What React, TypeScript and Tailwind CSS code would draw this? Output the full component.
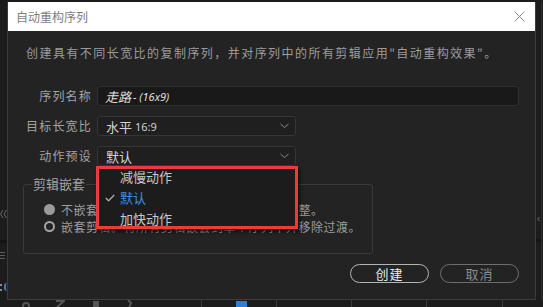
import React from "react"

const cjk = "font-['Noto_Sans_CJK_SC','Noto_Sans',sans-serif]"

const Chevron = () => (
  <svg width="9" height="6" viewBox="0 0 9 6" className="ml-auto mr-[6px]">
    <polyline points="0.5,1 4.5,4.5 8.5,1" fill="none" stroke="#8a8a8a" strokeWidth="1" />
  </svg>
)

const FormRow = ({ label, children }: { label: string; children: React.ReactNode }) => (
  <div className="flex items-center h-[20px]">
    <div className="w-[84px] text-right text-[12px] tracking-[1.2px] text-[#a3a3a3] leading-[20px]">{label}</div>
    <div className="ml-[5px] h-full flex">{children}</div>
  </div>
)

const Select = ({ children }: { children: React.ReactNode }) => (
  <div className="w-[199px] h-[20px] flex items-center bg-[#1f1f1f] border border-[#363636] rounded-[3px] pl-[8px] text-[13px] text-[#d6d6d6] leading-none">
    {children}
    <Chevron />
  </div>
)

function Menu() {
  const items = [
    { text: "减慢动作", active: false },
    { text: "默认", active: true },
    { text: "加快动作", active: false },
  ]
  return (
    <div className="absolute left-[88px] top-[135px] w-[202px] h-[63px] bg-[#1c1c1c] shadow-[inset_0_0_0_3px_#ef3a3c,2px_3px_3px_rgba(0,0,0,0.6)] flex flex-col">
      {items.map((it) => (
        <div key={it.text} className="h-[21px] flex items-center">
          <div className="w-[24px] flex justify-end pr-[5px]">
            {it.active && (
              <svg width="10" height="8" viewBox="0 0 10 8">
                <polyline points="0.8,4 3.6,6.8 9.2,1" fill="none" stroke="#a9a9a9" strokeWidth="1.4" />
              </svg>
            )}
          </div>
          <span className={`text-[13px] leading-none ${it.active ? "text-[#3d8ee6]" : "text-[#c9c9c9]"}`}>{it.text}</span>
        </div>
      ))}
    </div>
  )
}

function Dialog() {
  return (
    <div className={`w-[529px] h-[298px] flex flex-col border-x border-b border-[#3c3c3c] bg-[#232323] ${cjk}`}>
      <div className="h-[29px] bg-white flex items-center pl-[8px] pr-[10px]">
        <span className="text-[12px] text-[#7d7d7d] leading-none">自动重构序列</span>
        <svg width="11" height="11" viewBox="0 0 11 11" className="ml-auto">
          <path d="M0.5 0.5 L10.5 10.5 M10.5 0.5 L0.5 10.5" stroke="#8c8c8c" strokeWidth="1" />
        </svg>
      </div>

      <div className="relative flex-1 flex flex-col">
        <p className="mt-[13px] pl-[18px] text-[12px] leading-[18px] tracking-[1.45px] text-[#9c9c9c] whitespace-nowrap">
          创建具有不同长宽比的复制序列，并对序列中的所有剪辑应用"自动重构效果"。
        </p>

        <div className="mt-[24px] flex flex-col gap-[10px]">
          <FormRow label="序列名称">
            <div className="w-[422px] h-[20px] flex items-center bg-[#191919] border border-[#2f2f2f] rounded-[3px] pl-[7px] italic text-[#dedede] leading-none">
              <span className="text-[13px]">走路</span>
              <span className="text-[11px] font-['Noto_Sans',sans-serif] ml-[2px]">- (16x9)</span>
            </div>
          </FormRow>
          <FormRow label="目标长宽比">
            <Select>
              <span>水平</span>
              <span className="text-[11px] font-['Noto_Sans',sans-serif] ml-[3px] text-[#cfcfcf]">16:9</span>
            </Select>
          </FormRow>
          <FormRow label="动作预设">
            <Select>
              <span>默认</span>
            </Select>
          </FormRow>
        </div>

        <fieldset className="mt-[10px] ml-[15px] w-[350px] border border-[#3a3a3a] rounded-[3px] pt-[9px] pb-[18px]">
          <legend className="ml-[8px] px-[1px] text-[13px] leading-[16px] text-[#a3a3a3]">剪辑嵌套</legend>
          <div className="flex items-center h-[17px] pl-[20px]">
            <span className="w-[11px] h-[11px] rounded-full bg-[#9b9b9b]" />
            <span className="ml-[6px] text-[12px] tracking-[0.5px] text-[#9c9c9c] whitespace-nowrap">不嵌套剪辑。将在序列中对每个剪辑单独调整。</span>
          </div>
          <div className="flex items-center h-[17px] pl-[20px]">
            <span className="w-[11px] h-[11px] rounded-full border-2 border-[#a5a5a5]" />
            <span className="ml-[6px] text-[12px] tracking-[0.5px] text-[#9c9c9c] whitespace-nowrap">嵌套剪辑。将所有剪辑嵌套到单个序列中并移除过渡。</span>
          </div>
        </fieldset>

        <div className="mt-[10px] flex justify-end gap-[11px] pr-[16px]">
          <button className="w-[79px] h-[19px] rounded-full border-[1.5px] border-[#b4b4b4] text-[13px] leading-none text-[#ececec] tracking-[1px]">创建</button>
          <button className="w-[79px] h-[19px] rounded-full border-[1.5px] border-[#6e6e6e] text-[13px] leading-none text-[#8c8c8c] tracking-[1px]">取消</button>
        </div>

        <Menu />
      </div>
    </div>
  )
}

export default function App() {
  return (
    <div className="w-[543px] h-[307px] bg-[#1c1c1c] overflow-hidden flex flex-col pt-[2px]">
      <div className="flex">
        <div className="w-[7px] h-[298px] flex flex-col">
          <div className="mt-[206px] h-[12px] flex items-center">
            <svg width="7" height="10" viewBox="0 0 7 10">
              <path d="M3 1 L0.5 5 L3 9 M6.5 1 L4 5 L6.5 9" fill="none" stroke="#6a6a6a" strokeWidth="1" />
            </svg>
          </div>
          <div className="mt-[20px] h-[3px] bg-[#141414]" />
          <div className="mt-[9px] flex flex-col gap-[2px] w-[5px]">
            <div className="h-px bg-[#5e5e5e]" />
            <div className="h-px bg-[#5e5e5e]" />
            <div className="h-px bg-[#5e5e5e]" />
          </div>
          <div className="mt-[24px] flex items-center gap-[2px]">
            <div className="flex flex-col gap-[3px]">
              <div className="w-[2px] h-[2px] bg-[#8a8a8a]" />
              <div className="w-[2px] h-[2px] bg-[#8a8a8a]" />
            </div>
            <div className="w-[3px] h-[8px] border-l-2 border-[#4a78a8] rounded-l-full" />
          </div>
        </div>
        <Dialog />
        <div className="flex-1 h-[298px] flex">
          <div className="flex-1 flex flex-col">
            <div className="mt-[211px] text-[10px] leading-none text-[#6a6a6a] pl-[1px]">‹</div>
            <div className="mt-[16px] h-[3px] bg-[#141414]" />
          </div>
          <div className="w-px bg-[#2e2e2e] mr-[1px]" />
        </div>
      </div>
      <div className="h-[7px] flex">
        <div className="w-[22px]" />
        <div className="w-[8px] h-[8px] rounded-full border-2 border-[#555] mt-[2px]" />
        <div className="w-[25px]" />
        <svg width="10" height="8" viewBox="0 0 10 8">
          <path d="M1 1 H9 L1 8 H9" fill="none" stroke="#555" strokeWidth="2" />
        </svg>
        <div className="w-[28px]" />
        <div className="w-[6px] h-[6px] bg-[#555] mt-[1px]" />
        <div className="w-[27px]" />
        <svg width="8" height="8" viewBox="0 0 8 8">
          <path d="M2 0 L5 3 L3 8" fill="none" stroke="#555" strokeWidth="2" />
        </svg>
        <div className="w-[67px]" />
        <div className="w-px bg-[#3a3a3a]" />
        <div className="w-[34px]" />
        <div className="w-[11px] bg-[#2d7fd8] mt-[1px]" />
        <div className="w-[29px]" />
        <div className="w-px bg-[#3a3a3a]" />
        <div className="w-[74px]" />
        <div className="w-px bg-[#3a3a3a]" />
        <div className="w-[74px]" />
        <div className="w-px bg-[#3a3a3a]" />
        <div className="w-[75px]" />
        <div className="w-px bg-[#3a3a3a]" />
      </div>
    </div>
  )
}
